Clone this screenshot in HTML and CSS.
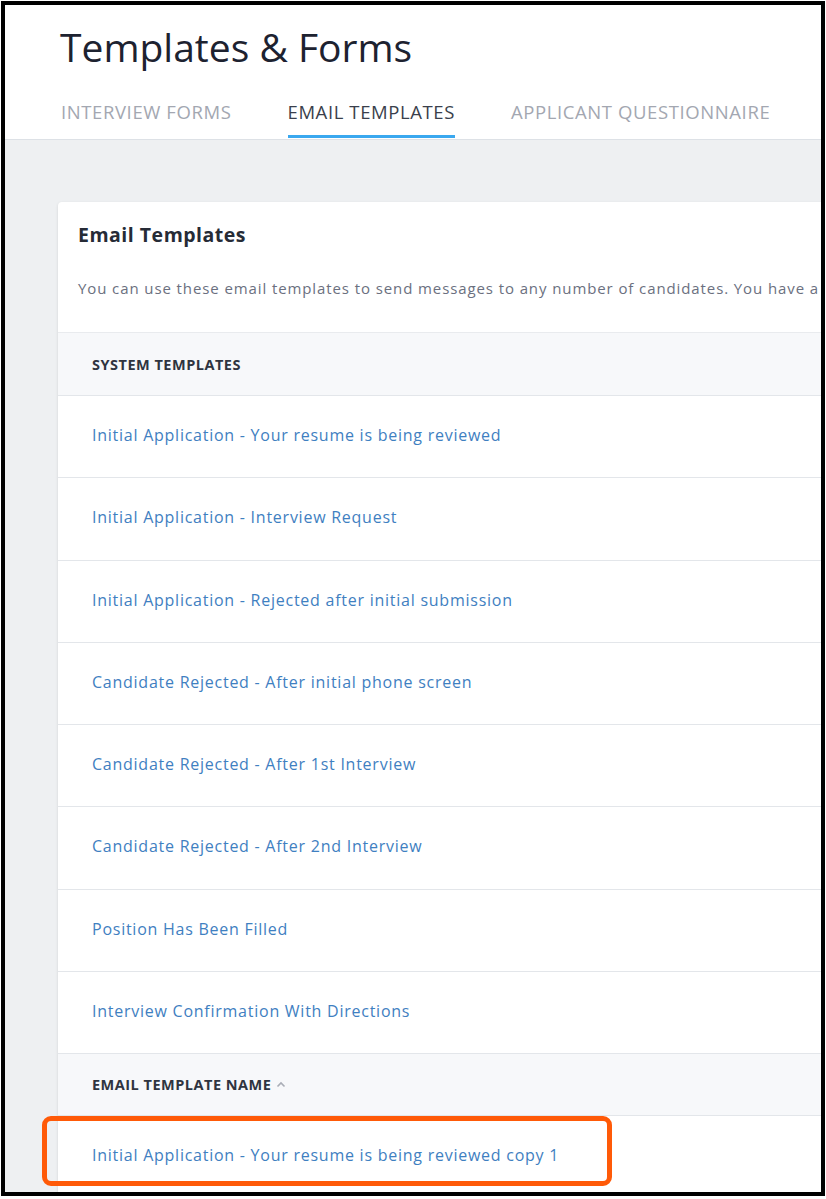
FILE: index.html
```html
<!DOCTYPE html>
<html>
<head>
<meta charset="utf-8">
<link rel="stylesheet" href="styles.css">
</head>
<body>
<div class="frame">
  <header class="header">
    <h1 class="title">Templates &amp; Forms</h1>
    <nav class="tabs">
      <span class="tab">INTERVIEW FORMS</span>
      <span class="tab active">EMAIL TEMPLATES</span>
      <span class="tab">APPLICANT QUESTIONNAIRE</span>
    </nav>
  </header>
  <main class="content">
    <section class="card">
      <div class="card-head">
        <h2 class="card-title">Email Templates</h2>
        <p class="card-desc">You can use these email templates to send messages to any number of candidates. You have a</p>
      </div>
      <div class="thead">SYSTEM TEMPLATES</div>
      <div class="row"><a class="link">Initial Application - Your resume is being reviewed</a></div>
      <div class="row"><a class="link">Initial Application - Interview Request</a></div>
      <div class="row"><a class="link">Initial Application - Rejected after initial submission</a></div>
      <div class="row"><a class="link">Candidate Rejected - After initial phone screen</a></div>
      <div class="row"><a class="link">Candidate Rejected - After 1st Interview</a></div>
      <div class="row"><a class="link">Candidate Rejected - After 2nd Interview</a></div>
      <div class="row"><a class="link">Position Has Been Filled</a></div>
      <div class="row"><a class="link">Interview Confirmation With Directions</a></div>
      <div class="thead thead-2">EMAIL TEMPLATE NAME
        <svg class="caret" width="10" height="7" viewBox="0 0 10 7"><polyline points="1.5,5.5 5,2 8.5,5.5" fill="none" stroke="#a9adb6" stroke-width="1.6"/></svg>
      </div>
      <div class="row row-last"><a class="link">Initial Application - Your resume is being reviewed copy 1</a></div>
    </section>
  </main>
  <div class="highlight"></div>
</div>
</body>
</html>
```
FILE: styles.css
```css
html, body {
  margin: 0;
  padding: 0;
  background: #fff;
}
body {
  font-family: "Open Sans", "Lato", sans-serif;
}
.frame {
  position: relative;
  margin: 1px 0 0 1px;
  width: 816px;
  height: 1187px;
  border: 4px solid #000;
  background: #eef0f2;
  overflow: hidden;
}
.header {
  background: #fff;
  padding-left: 55px;
  height: 135px;
  box-sizing: border-box;
  border-bottom: 1px solid #dde1e6;
}
.title {
  margin: 0;
  padding-top: 18px;
  font-size: 39px;
  line-height: 48px;
  font-weight: 400;
  color: #1d2230;
}
.tabs {
  display: flex;
  gap: 56px;
  padding-left: 1px;
}
.tab {
  padding-top: 31px;
  padding-bottom: 13px;
  font-size: 18.5px;
  line-height: 20px;
  letter-spacing: 0.6px;
  color: #a3a7b1;
  border-bottom: 3px solid transparent;
}
.tab.active {
  color: #3a3f4c;
  border-bottom-color: #3aa8ef;
}
.content {
  padding: 62px 0 0 53px;
}
.card {
  width: 820px;
  background: #fff;
  border-radius: 4px;
  box-shadow: 0 1px 3px rgba(0, 0, 0, 0.12);
}
.card-head {
  padding: 21px 20px 34px;
}
.card-title {
  margin: 0;
  font-size: 19.5px;
  line-height: 24px;
  font-weight: 700;
  color: #262b36;
  letter-spacing: 0.5px;
}
.card-desc {
  margin: 31px 0 0;
  font-size: 15px;
  line-height: 20px;
  color: #6b7080;
  white-space: nowrap;
  letter-spacing: 0.9px;
}
.thead {
  box-sizing: border-box;
  height: 64px;
  display: flex;
  align-items: center;
  padding-left: 34px;
  background: #f7f8fa;
  border-top: 1px solid #e9ebee;
  border-bottom: 1px solid #e3e6ea;
  font-size: 14.5px;
  font-weight: 700;
  letter-spacing: 0.5px;
  color: #2f3440;
}
.thead-2 {
  height: 62px;
  border-top: none;
}
.caret {
  margin-left: 5px;
}
.row {
  box-sizing: border-box;
  height: 82.25px;
  display: flex;
  align-items: center;
  padding-left: 34px;
  padding-bottom: 3px;
  border-bottom: 1px solid #e3e6ea;
}
.link {
  font-size: 16px;
  letter-spacing: 0.75px;
  color: #3f80c1;
  text-decoration: none;
}
.highlight {
  position: absolute;
  left: 37px;
  top: 1111px;
  width: 570px;
  height: 70px;
  box-sizing: border-box;
  border: 5px solid #ff5a08;
  border-radius: 9px;
}
```
